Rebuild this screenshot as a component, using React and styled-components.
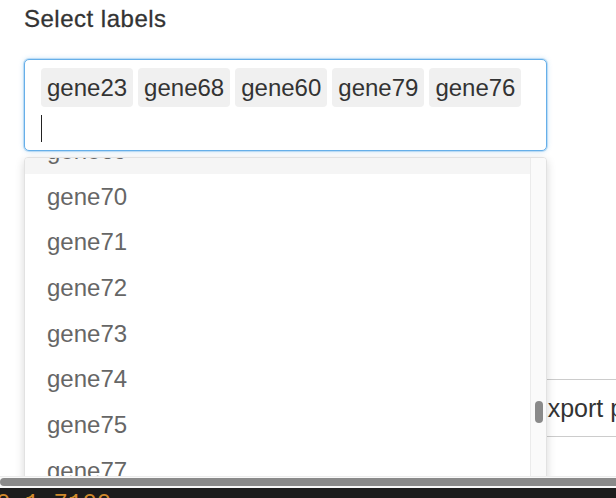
import React from "react";
import styled, { createGlobalStyle } from "styled-components";

const GlobalStyle = createGlobalStyle`
  html, body, #root { margin: 0; padding: 0; height: 498px; overflow: hidden; }
  body { background: #fff; font-family: "Liberation Sans", Arial, sans-serif; }
  * { box-sizing: border-box; }
`;

const Screen = styled.div`
  width: 616px;
  height: 498px;
  display: flex;
  flex-direction: column;
  overflow: hidden;
`;

const Main = styled.div`
  flex: 0 0 476px;
  position: relative;
  overflow: hidden;
  background: #fff;
  padding: 5px 0 0 24px;
`;

const Label = styled.div`
  font-size: 24px;
  line-height: 28px;
  color: #333;
  letter-spacing: 0.5px;
  -webkit-text-stroke: 0.3px #333;
`;

const Field = styled.div`
  position: relative;
  width: 523px;
  margin-top: 26px;
`;

const InputBox = styled.div`
  width: 100%;
  border: 1px solid #66afe9;
  border-radius: 5px;
  box-shadow: 0 0 0 1px rgba(102, 175, 233, 0.3), 0 0 5px rgba(102, 175, 233, 0.45);
  padding: 8px 16px;
  background: #fff;
`;

const Tags = styled.div`
  display: flex;
  flex-wrap: wrap;
  gap: 5px;
`;

const Tag = styled.span`
  background: #f0f0f0;
  border-radius: 4px;
  padding: 6px 6px;
  font-size: 24px;
  line-height: 27px;
  color: #333;
`;

const CaretRow = styled.div`
  margin-top: 8px;
  height: 27px;
  display: flex;
`;

const Caret = styled.div`
  width: 1px;
  height: 27px;
  background: #222;
`;

const Dropdown = styled.div`
  position: absolute;
  top: calc(100% + 6px);
  left: 0;
  width: 523px;
  height: 340px;
  display: flex;
  background: #fff;
  border: 1px solid #e2e2e2;
  border-radius: 4px;
  box-shadow: 0 3px 10px rgba(0, 0, 0, 0.16);
  overflow: hidden;
  z-index: 5;
`;

const List = styled.div`
  flex: 1;
  overflow: hidden;
`;

const ListInner = styled.div`
  margin-top: -30px;
`;

const Option = styled.div`
  height: 45.7px;
  line-height: 45.7px;
  padding-left: 22px;
  font-size: 24px;
  color: #666;
  background: ${(p) => (p.$active ? "#f5f5f5" : "#fff")};
  white-space: nowrap;
`;

const ScrollTrack = styled.div`
  width: 16px;
  background: #fafafa;
  border-left: 1px solid #ebebeb;
  display: flex;
  flex-direction: column;
  align-items: center;
`;

const ScrollThumb = styled.div`
  width: 8px;
  height: 22px;
  margin-top: 243px;
  border-radius: 4px;
  background: #8a8a8a;
`;

const Toolbar = styled.div`
  margin-top: 228px;
  display: flex;
`;

const Spacer = styled.div`
  flex: 0 0 494px;
`;

const Button = styled.button`
  flex: 0 0 auto;
  height: 58px;
  padding: 0 40px 0 12px;
  border: 1px solid #ccc;
  border-radius: 4px;
  background: #fff;
  font-family: "Liberation Sans", Arial, sans-serif;
  font-size: 25px;
  color: #333;
  white-space: nowrap;
`;

const HScroll = styled.div`
  flex: 0 0 12px;
  background: #f9f9f9;
  border-top: 1px solid #ececec;
  padding: 1px 0 2px 0;
  overflow: hidden;
`;

const HThumb = styled.div`
  width: 660px;
  height: 8px;
  border-radius: 4px;
  background: #8a8a8a;
`;

const Console = styled.div`
  flex: 1;
  background: #1c1c1c;
  color: #d08a2d;
  font-family: "Liberation Mono", "Courier New", monospace;
  font-size: 24px;
  line-height: 24px;
  padding-top: 4px;
  white-space: pre;
  overflow: hidden;
`;

const ConsoleText = styled.div`
  margin-left: -4px;
`;

const selected = ["gene23", "gene68", "gene60", "gene79", "gene76"];
const options = ["gene69", "gene70", "gene71", "gene72", "gene73", "gene74", "gene75", "gene77", "gene78"];

export default function App() {
  return (
    <Screen>
      <GlobalStyle />
      <Main>
        <Label>Select labels</Label>
        <Field>
          <InputBox>
            <Tags>
              {selected.map((g) => (
                <Tag key={g}>{g}</Tag>
              ))}
            </Tags>
            <CaretRow>
              <Caret />
            </CaretRow>
          </InputBox>
          <Dropdown>
            <List>
              <ListInner>
                {options.map((o, i) => (
                  <Option key={o} $active={i === 0}>
                    {o}
                  </Option>
                ))}
              </ListInner>
            </List>
            <ScrollTrack>
              <ScrollThumb />
            </ScrollTrack>
          </Dropdown>
        </Field>
        <Toolbar>
          <Spacer />
          <Button>Export plot</Button>
        </Toolbar>
      </Main>
      <HScroll>
        <HThumb />
      </HScroll>
      <Console>
        <ConsoleText>0.1 7100</ConsoleText>
      </Console>
    </Screen>
  );
}
